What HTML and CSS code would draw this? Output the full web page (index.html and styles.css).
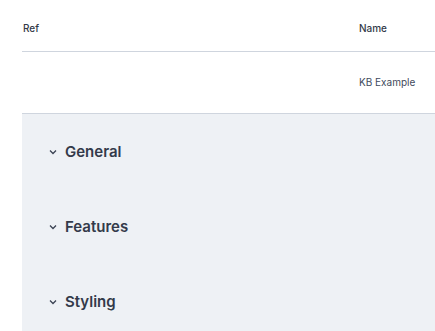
FILE: index.html
```html
<!DOCTYPE html>
<html lang="en">
<head>
    <meta charset="UTF-8">
    <title>KB</title>
    <link rel="stylesheet" href="styles.css">
</head>
<body>

<div class="table">
    <div class="row head">
        <div class="cell ref">Ref</div>
        <div class="cell name">Name</div>
    </div>
    <div class="row body">
        <div class="cell ref"></div>
        <div class="cell name">KB Example</div>
    </div>
</div>

<div class="panel">
    <div class="section">
        <svg class="chev" width="8" height="6" viewBox="0 0 8 6"><path d="M1 1.5 L4 4.5 L7 1.5" fill="none" stroke="#3b4253" stroke-width="1.3"/></svg>
        <span>General</span>
    </div>
    <div class="section">
        <svg class="chev" width="8" height="6" viewBox="0 0 8 6"><path d="M1 1.5 L4 4.5 L7 1.5" fill="none" stroke="#3b4253" stroke-width="1.3"/></svg>
        <span>Features</span>
    </div>
    <div class="section">
        <svg class="chev" width="8" height="6" viewBox="0 0 8 6"><path d="M1 1.5 L4 4.5 L7 1.5" fill="none" stroke="#3b4253" stroke-width="1.3"/></svg>
        <span>Styling</span>
    </div>
</div>

</body>
</html>
```

FILE: styles.css
```css
body {
    font-family: 'Inter', 'Noto Sans', sans-serif;
    margin: 0;
    padding: 0 0 0 22px;
    background: white;
    color: #333a48;
    overflow: hidden;
}
.row {
    display: flex;
    align-items: center;
    border-bottom: 1px solid #cfd5de;
    box-sizing: border-box;
}
.row.head {
    height: 52px;
    padding-top: 4px;
    font-size: 10px;
    font-weight: 500;
}
.row.body {
    height: 62px;
    padding-bottom: 1px;
    font-size: 10px;
    color: #414a5c;
}
.cell.ref {
    width: 336px;
    padding-left: 1px;
}
.cell.name {
    flex: 1;
}
.panel {
    background: #eef1f5;
}
.section {
    height: 75px;
    display: flex;
    align-items: center;
    padding-left: 27px;
    font-size: 15px;
    font-weight: 600;
    color: #333a4a;
}
.chev {
    margin-right: 8px;
}
```
